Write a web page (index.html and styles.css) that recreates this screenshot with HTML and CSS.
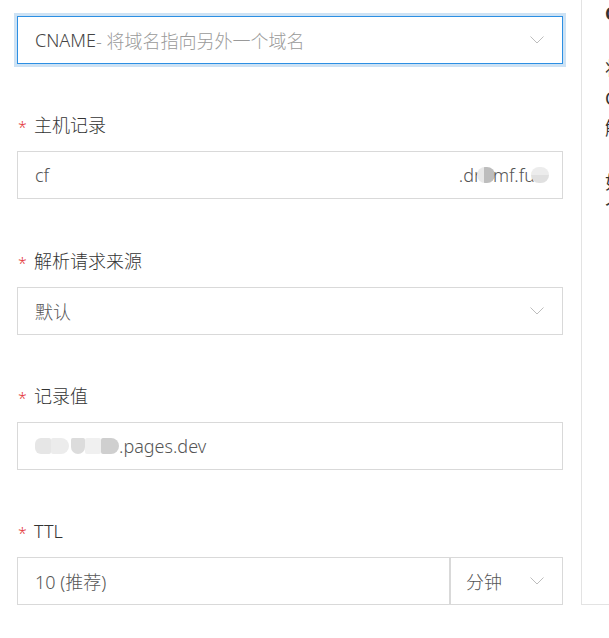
FILE: index.html
```html
<!DOCTYPE html>
<html lang="zh-CN">
<head>
<meta charset="utf-8">
<title>添加记录</title>
<link rel="stylesheet" href="styles.css">
</head>
<body>
<div class="page">
  <form class="form">
    <div class="field">
      <div class="box select focused">
        <span class="value"><span class="strong">CNAME</span><span class="muted">- 将域名指向另外一个域名</span></span>
        <svg class="chev" width="14" height="8" viewBox="0 0 14 8"><polyline points="0.5,0.5 7,7 13.5,0.5" fill="none" stroke="#bdbdbd" stroke-width="1"/></svg>
      </div>
    </div>
    <div class="field">
      <div class="label"><span class="req">*</span>主机记录</div>
      <div class="box input">
        <span class="value">cf</span>
        <span class="suffix">.dr<i class="blob b1"></i>mf.fu<i class="blob b2"></i></span>
      </div>
    </div>
    <div class="field wide-gap">
      <div class="label"><span class="req">*</span>解析请求来源</div>
      <div class="box select">
        <span class="value">默认</span>
        <svg class="chev" width="14" height="8" viewBox="0 0 14 8"><polyline points="0.5,0.5 7,7 13.5,0.5" fill="none" stroke="#bdbdbd" stroke-width="1"/></svg>
      </div>
    </div>
    <div class="field">
      <div class="label"><span class="req">*</span>记录值</div>
      <div class="box input">
        <span class="value"><i class="blob m1"></i><i class="blob m2"></i><i class="blob m3"></i><i class="blob m4"></i><i class="blob m5"></i>.pages.dev</span>
      </div>
    </div>
    <div class="field">
      <div class="label"><span class="req">*</span>TTL</div>
      <div class="combo">
        <div class="box input ttl"><span class="value">10 (推荐)</span></div>
        <div class="box select unit">
          <span class="value">分钟</span>
          <svg class="chev" width="14" height="8" viewBox="0 0 14 8"><polyline points="0.5,0.5 7,7 13.5,0.5" fill="none" stroke="#bdbdbd" stroke-width="1"/></svg>
        </div>
      </div>
    </div>
  </form>
  <aside class="help">
    <div class="help-title">CNAME 记录</div>
    <p class="help-p">将域名指向另外一个域名</p>
    <p class="help-p">CNAME 记录值为域名</p>
    <p class="help-p">解析生效时间约10分钟</p>
    <p class="help-q">如需帮助</p>
    <p class="help-q">个人文档</p>
  </aside>
</div>
</body>
</html>
```
FILE: styles.css
```css
html, body {
  margin: 0;
  padding: 0;
  background: #fff;
  overflow: hidden;
}

body {
  font-family: "Noto Sans", "Noto Sans CJK SC", sans-serif;
  font-size: 18px;
  color: #333;
}

.page {
  display: flex;
  align-items: stretch;
  padding-left: 17px;
  width: 1000px;
}

.form {
  width: 546px;
  flex-shrink: 0;
  padding-top: 16px;
  margin: 0;
}

.field + .field {
  margin-top: 48px;
}

.field + .wide-gap {
  margin-top: 49px;
}

.label {
  display: flex;
  align-items: center;
  height: 27px;
  line-height: 27px;
  margin-bottom: 12px;
  color: #333;
  font-weight: 300;
}

.req {
  color: #e4393c;
  font-size: 16px;
  width: 16px;
  padding-left: 1px;
  padding-top: 4px;
}

.box {
  box-sizing: border-box;
  height: 48px;
  border: 1px solid #d9d9d9;
  background: #fff;
  display: flex;
  align-items: center;
  justify-content: space-between;
  padding: 0 13px 0 17px;
  color: #555;
  font-weight: 300;
}

.select {
  padding-right: 18px;
}

.focused {
  border-color: #2c8fe3;
  box-shadow: 0 0 0 3px #cde2f4;
}

.strong {
  color: #444;
}

.muted {
  color: #9a9a9a;
}

.chev {
  display: block;
}

.suffix {
  color: #555;
  display: flex;
  align-items: center;
}

.value {
  display: flex;
  align-items: center;
  white-space: nowrap;
}

.blob {
  display: inline-block;
  height: 16px;
  border-radius: 8px;
}

.b1 {
  width: 18px;
  background: linear-gradient(90deg, #e8e8e8 0 40%, #bdbdbd 40% 100%);
  margin: 0 -2px 0 -4px;
}

.b2 {
  width: 18px;
  background: linear-gradient(180deg, #ececec 0 50%, #e0e0e0 50% 100%);
  margin-left: -4px;
}

.m1 { width: 16px; background: #e6e6e6; border-radius: 6px 2px 2px 6px; }
.m2 { width: 18px; background: #ececec; border-radius: 2px 8px 8px 2px; }
.m3 { width: 14px; background: #dcdcdc; border-radius: 2px 2px 8px 8px; margin-left: 2px; }
.m4 { width: 16px; background: #f0f0f0; border-radius: 2px; }
.m5 { width: 18px; background: #cfcfcf; border-radius: 2px 8px 8px 2px; }

.combo {
  display: flex;
}

.ttl {
  width: 433px;
  flex-shrink: 0;
}

.unit {
  flex: 1;
  padding-left: 15px;
}

.help {
  margin-left: 18px;
  width: 300px;
  flex-shrink: 0;
  border-left: 1px solid #e3e3e3;
  border-bottom: 1px solid #e3e3e3;
  padding-left: 23px;
  color: #333;
}

.help-title {
  line-height: 27px;
  font-weight: 700;
}

.help-p {
  margin: 0;
  line-height: 30px;
}

.help-title + .help-p {
  margin-top: 26px;
}

.help-q {
  margin: 0;
  line-height: 24px;
}

.help-p + .help-q {
  margin-top: 27px;
}
```
